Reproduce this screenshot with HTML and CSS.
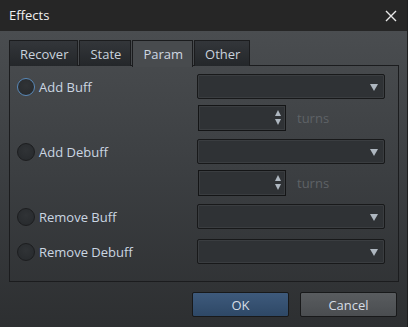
FILE: index.html
```html
<!DOCTYPE html>
<html>
<head>
<meta charset="utf-8">
<link rel="stylesheet" href="styles.css">
</head>
<body>
<div class="window">
  <div class="titlebar">
    <span class="title">Effects</span>
    <svg class="close" width="12" height="12" viewBox="0 0 12 12"><path d="M1 1L11 11M11 1L1 11" stroke="#e8e8e8" stroke-width="1.4" fill="none"/></svg>
  </div>
  <div class="body">
    <div class="tabs">
      <div class="tab">Recover</div>
      <div class="tab">State</div>
      <div class="tab active">Param</div>
      <div class="tab">Other</div>
    </div>
    <div class="panel">
      <div class="row">
        <div class="opt"><span class="radio focus"></span><span class="lbl">Add Buff</span></div>
        <div class="combo"><span class="arrow"></span></div>
      </div>
      <div class="subrow">
        <div class="spin"><span class="spinarrows"><span class="up"></span><span class="down"></span></span></div>
        <span class="turns">turns</span>
      </div>
      <div class="row gap1">
        <div class="opt"><span class="radio"></span><span class="lbl">Add Debuff</span></div>
        <div class="combo"><span class="arrow"></span></div>
      </div>
      <div class="subrow">
        <div class="spin"><span class="spinarrows"><span class="up"></span><span class="down"></span></span></div>
        <span class="turns">turns</span>
      </div>
      <div class="row gap2">
        <div class="opt"><span class="radio"></span><span class="lbl">Remove Buff</span></div>
        <div class="combo"><span class="arrow"></span></div>
      </div>
      <div class="row gap3">
        <div class="opt"><span class="radio"></span><span class="lbl">Remove Debuff</span></div>
        <div class="combo"><span class="arrow"></span></div>
      </div>
    </div>
    <div class="buttons">
      <div class="btn ok">OK</div>
      <div class="btn cancel">Cancel</div>
    </div>
  </div>
</div>
</body>
</html>
```

FILE: styles.css
```css
* { box-sizing: border-box; }
html, body { margin: 0; padding: 0; }
body {
  width: 408px;
  height: 327px;
  overflow: hidden;
  font-family: "Open Sans", "DejaVu Sans", sans-serif;
  font-size: 12px;
  background: #2b2d2f;
}
.window {
  width: 408px;
  height: 327px;
  display: flex;
  flex-direction: column;
  border-right: 1px solid #1e1f20;
}
.titlebar {
  height: 31px;
  background: #262626;
  display: flex;
  align-items: center;
  justify-content: space-between;
  padding: 0 10px 0 9px;
  color: #f0f0f0;
  font-size: 13px;
  flex: none;
}
.title { margin-top: -1px; }
.close { display: block; }
.body {
  flex: 1;
  background: linear-gradient(#4a4d50 0%, #3b3e41 50%, #2d2f31 100%);
  padding: 9px 8px 0 9px;
  display: flex;
  flex-direction: column;
}
.tabs {
  display: flex;
  height: 26px;
  position: relative;
  z-index: 1;
}
.tab {
  height: 26px;
  padding: 0 9px 0 10px;
  margin-right: 1px;
  border: 1px solid #1b1c1e;
  border-bottom: none;
  background: linear-gradient(#33363a, #24272a);
  color: #c9d2dc;
  font-size: 13px;
  display: flex;
  align-items: center;
  border-radius: 1px 1px 0 0;
}
.tab.active {
  background: #484b4e;
  height: 27px;
  color: #cfd8e2;
}
.panel {
  height: 217px;
  margin-top: -1px;
  border: 1px solid #1b1c1e;
  padding: 8px 13px 0 7px;
  display: flex;
  flex-direction: column;
}
.row {
  display: flex;
  align-items: center;
  justify-content: space-between;
  height: 25px;
}
.gap1 { margin-top: 8px; }
.gap2 { margin-top: 8px; }
.gap3 { margin-top: 10px; }
.opt { display: flex; align-items: center; }
.radio {
  width: 18px;
  height: 18px;
  border-radius: 50%;
  background: radial-gradient(circle at 50% 40%, #303336, #26292c);
  border: 1px solid #1c1d1f;
  margin-right: 4px;
}
.radio.focus { border: 1.5px solid #5888b8; }
.lbl { color: #cbd6e2; font-size: 13px; }
.combo {
  width: 188px;
  height: 25px;
  border: 1px solid #18191a;
  border-radius: 2px;
  background: #2f3235;
  box-shadow: inset 0 0 0 1px #3a3d40;
  position: relative;
}
.arrow {
  position: absolute;
  right: 6px;
  top: 9px;
  width: 0; height: 0;
  border-left: 4px solid transparent;
  border-right: 4px solid transparent;
  border-top: 7px solid #aeb7c0;
}
.subrow {
  display: flex;
  align-items: center;
  height: 26px;
  margin-top: 6px;
  padding-left: 181px;
}
.spin {
  width: 88px;
  height: 26px;
  border: 1px solid #141516;
  background: #2f3235;
  box-shadow: inset 0 0 0 1px #3a3d40;
  position: relative;
}
.spinarrows {
  position: absolute;
  right: 4px;
  top: 4px;
  display: flex;
  flex-direction: column;
  gap: 3px;
}
.up {
  width: 0; height: 0;
  border-left: 3.5px solid transparent;
  border-right: 3.5px solid transparent;
  border-bottom: 6px solid #aeb7c0;
}
.down {
  width: 0; height: 0;
  border-left: 3.5px solid transparent;
  border-right: 3.5px solid transparent;
  border-top: 6px solid #aeb7c0;
}
.turns {
  color: #5e6266;
  font-size: 13px;
  margin-left: 11px;
}
.buttons {
  display: flex;
  justify-content: flex-end;
  gap: 11px;
  margin-top: 10px;
  padding-right: 2px;
}
.btn {
  width: 97px;
  height: 25px;
  border: 1px solid #18191a;
  border-radius: 2px;
  display: flex;
  align-items: center;
  justify-content: center;
  font-size: 13px;
  color: #d6dde6;
}
.ok { background: linear-gradient(#3e5a7c, #2e4866); }
.cancel { background: linear-gradient(#595c5f, #4a4d50); }
```
